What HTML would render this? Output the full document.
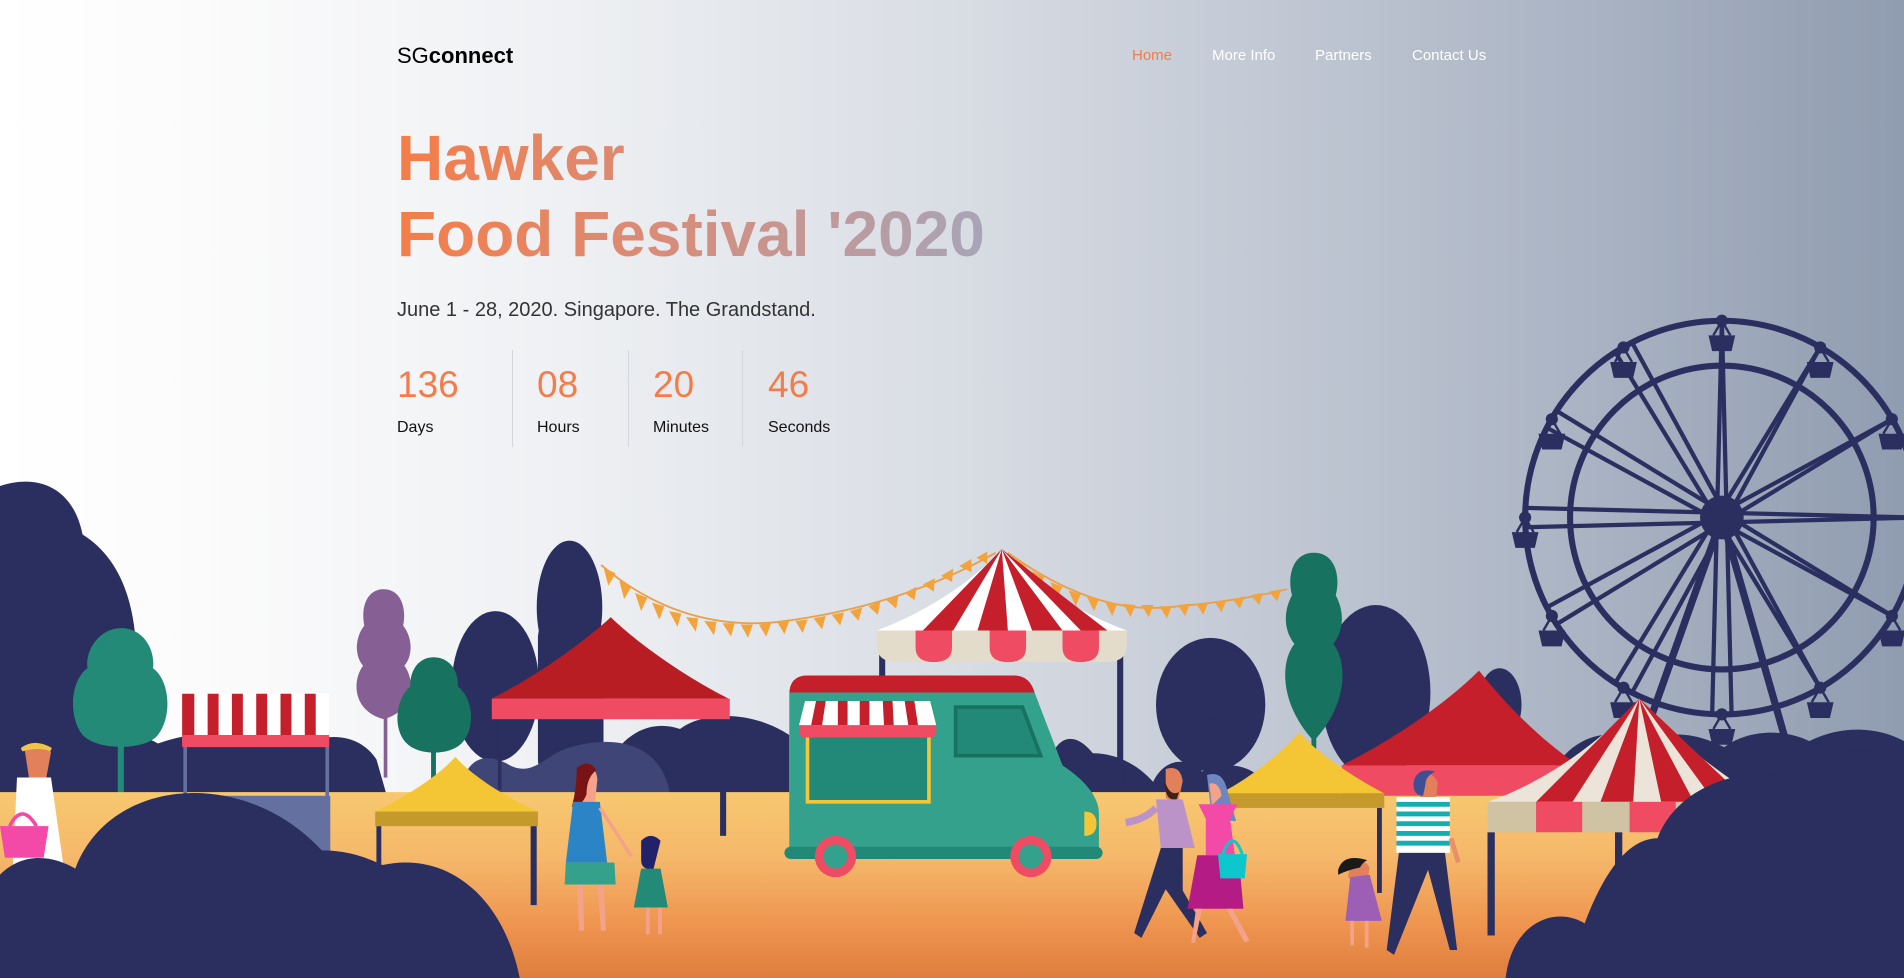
<!DOCTYPE html>
<html><head><meta charset="utf-8"><style>
html,body{margin:0;padding:0}
body{width:1904px;height:978px;overflow:hidden;position:relative;font-family:"Liberation Sans",Arial,sans-serif;
background:linear-gradient(90deg,#ffffff 0%,#fafafb 13%,#eef0f3 30%,#d9dde4 50%,#c0c7d3 68%,#a7b1c1 85%,#909cb0 100%);}
svg.bg{position:absolute;left:0;top:0;width:1904px;height:978px}
.logo{position:absolute;left:397px;top:43px;font-size:22px;color:#000}
.logo b{font-weight:700}
.nav{position:absolute;top:47px;font-size:15px;color:#fff}
h1{position:absolute;left:397px;top:120px;margin:0;font-size:64px;line-height:76px;font-weight:700;white-space:nowrap;
background:linear-gradient(90deg,#f57d48 0px,#d98c78 260px,#a7a5b8 590px);-webkit-background-clip:text;background-clip:text;color:transparent;width:600px}
.sub{position:absolute;left:397px;top:299px;font-size:20px;color:#333}
.cd{position:absolute;top:350px;height:97px}
.cd .n{font-size:37px;color:#f47c48;margin-top:15px;line-height:40px}
.cd .l{font-size:16px;color:#111;margin-top:14px}
.div{position:absolute;top:350px;width:1px;height:97px;background:#d3d6dd}
</style></head><body>
<svg class="bg" viewBox="0 0 1568 805" preserveAspectRatio="none" xmlns="http://www.w3.org/2000/svg">
<defs>
<linearGradient id="g" x1="0" y1="0" x2="0" y2="1"><stop offset="0" stop-color="#f7c870"/><stop offset="0.35" stop-color="#f5b86a"/><stop offset="0.7" stop-color="#ef9651"/><stop offset="1" stop-color="#df7d3d"/></linearGradient>
<g id="gd"><line x1="0" y1="0" x2="-7" y2="12" stroke="#2a2f5f" stroke-width="2"/><line x1="0" y1="0" x2="7" y2="12" stroke="#2a2f5f" stroke-width="2"/><path d="M-11 12h22l-3 13h-16z" fill="#2a2f5f"/><circle r="5" fill="#2a2f5f"/></g>
</defs>
<g stroke="#2a2f5f" fill="none">
<circle cx="1418" cy="426" r="162" stroke-width="5"/>
<circle cx="1418" cy="426" r="125" stroke-width="5"/>
<g stroke-width="3.5">
<g id="sp"><line x1="1418" y1="264" x2="1410" y2="588"/><line x1="1418" y1="264" x2="1426" y2="588"/></g>
<use href="#sp" transform="rotate(30 1418 426)"/><use href="#sp" transform="rotate(60 1418 426)"/><use href="#sp" transform="rotate(90 1418 426)"/><use href="#sp" transform="rotate(120 1418 426)"/><use href="#sp" transform="rotate(150 1418 426)"/>
</g>
<line x1="1418" y1="426" x2="1335" y2="660" stroke-width="6"/><line x1="1418" y1="426" x2="1485" y2="660" stroke-width="6"/>
</g>
<circle cx="1418" cy="426" r="18" fill="#2a2f5f"/>
<use href="#gd" x="1418" y="264"/><use href="#gd" x="1499" y="286"/><use href="#gd" x="1558" y="345"/><use href="#gd" x="1580" y="426"/><use href="#gd" x="1558" y="507"/><use href="#gd" x="1499" y="566"/><use href="#gd" x="1418" y="588"/><use href="#gd" x="1337" y="566"/><use href="#gd" x="1278" y="507"/><use href="#gd" x="1256" y="426"/><use href="#gd" x="1278" y="345"/><use href="#gd" x="1337" y="286"/>
<path d="M0 400 C30 390 60 400 68 440 C100 460 115 500 112 560 L112 660 L0 660Z" fill="#2a2f5f"/>
<ellipse cx="469" cy="500" rx="27" ry="55" fill="#2a2f5f"/><rect x="443" y="500" width="54" height="150" rx="25" fill="#2a2f5f"/>
<ellipse cx="408" cy="565" rx="36" ry="62" fill="#2a2f5f"/>
<ellipse cx="997" cy="580" rx="45" ry="55" fill="#2a2f5f"/><rect x="995" y="590" width="4" height="60" fill="#2a2f5f"/>
<ellipse cx="1133" cy="570" rx="45" ry="72" fill="#2a2f5f"/>
<ellipse cx="1235" cy="580" rx="18" ry="30" fill="#2a2f5f"/>
<path d="M0 660 L0 620 C30 600 60 610 70 615 C90 600 120 605 130 612 C170 598 220 600 250 612 C280 600 300 610 310 625 L320 660Z" fill="#2a2f5f"/>
<path d="M490 660 C500 610 530 590 560 600 C580 585 620 585 650 605 L650 660Z" fill="#2a2f5f"/>
<path d="M860 660 C860 610 880 595 900 620 C920 620 940 630 955 650 L955 660Z" fill="#2a2f5f"/>
<path d="M1270 660 C1280 610 1320 595 1350 610 C1380 600 1400 605 1420 615 C1440 600 1470 600 1490 610 C1520 595 1550 600 1568 610 L1568 660Z" fill="#2a2f5f"/>
<path d="M1090 660 C1100 640 1130 630 1150 645 L1150 660Z" fill="#2a2f5f"/>
<path d="M945 660 C950 625 975 620 990 635 C1010 625 1040 628 1050 660Z" fill="#2a2f5f"/>
<rect x="97" y="580" width="5" height="75" fill="#238a78"/>
<path d="M100 517 C118 517 128 535 126 550 C140 560 142 590 130 605 C120 618 80 618 68 605 C56 590 58 560 72 550 C70 535 82 517 100 517Z" fill="#238a78"/>
<rect x="316" y="580" width="3" height="60" fill="#866094"/>
<path d="M316 485 C330 485 335 500 332 515 C340 525 340 540 333 548 C342 560 342 585 316 592 C290 585 290 560 299 548 C292 540 292 525 300 515 C297 500 302 485 316 485Z" fill="#866094"/>
<rect x="355" y="600" width="4" height="45" fill="#177260"/>
<path d="M357 541 C372 541 378 555 377 565 C390 575 392 600 380 612 C370 622 345 622 335 612 C323 600 326 575 338 565 C337 555 343 541 357 541Z" fill="#177260"/>
<rect x="1080" y="590" width="4" height="60" fill="#177260"/>
<path d="M1082 455 C1100 455 1104 475 1100 490 C1108 505 1106 520 1098 530 C1110 545 1110 580 1082 610 C1054 580 1054 545 1066 530 C1058 520 1056 505 1064 490 C1060 475 1064 455 1082 455Z" fill="#177260"/>
<path d="M380 655 C380 630 395 615 420 630 C440 640 450 620 470 615 C505 605 545 610 552 655Z" fill="#3f4577"/>
<rect x="0" y="652" width="1568" height="153" fill="url(#g)"/>
<rect x="151" y="600" width="3" height="65" fill="#6470a0"/><rect x="268" y="600" width="3" height="60" fill="#6470a0"/>
<rect x="151" y="655" width="121" height="60" fill="#6470a0"/>
<g>
<rect x="150" y="571" width="121" height="42" fill="#fff"/>
<path d="M150 571h10v42h-10zM171 571h9v42h-9zM191 571h9v42h-9zM211 571h9v42h-9zM231 571h9v42h-9zM251 571h9v42h-9z" fill="#c41f2a"/>
<path d="M150 605h121v10h-121z" fill="#ef4b63"/>
</g>
<rect x="410" y="590" width="3" height="60" fill="#2a2f5f"/><rect x="593" y="590" width="5" height="98" fill="#2a2f5f"/>
<path d="M503 508 C520 525 560 555 600 575 L405 575 C445 555 485 525 503 508Z" fill="#b91d24"/>
<rect x="405" y="575" width="196" height="17" fill="#ef4b63"/>
<path d="M495 465 Q560 520 640 512 Q740 500 820 455" stroke="#e9a04a" fill="none" stroke-width="1.5"/>
<path d="M830 455 Q900 505 960 500 Q1020 495 1060 485" stroke="#e9a04a" fill="none" stroke-width="1.5"/>
<g fill="#f4a23a">
<path d="M497 467l10 5l-6 10z M510 478l10 5l-6 10z M523 488l10 4l-5 11z M537 496l10 3l-4 11z M551 503l10 2l-3 11z M565 508l10 1l-2 11z M580 511l10 1l-2 11z M595 513l10 0l-3 11z M610 514l10 0l-4 11z M625 514l10 -1l-4 11z M640 512l10 -1l-4 11z M655 511l10 -1l-4 11z M670 509l10 -2l-3 11z M685 506l10 -2l-3 11z M700 503l10 -3l-3 11z M715 499l10 -4l-2 11z M730 494l10 -4l-2 11z M745 488l10 -5l-2 11z M760 481l10 -5l-1 11z M775 474l10 -6l-1 11z M790 466l10 -6l0 11z M804 459l9 -5l0 10z"/>
<path d="M835 460l10 5l-5 10z M850 470l10 5l-5 10z M865 479l10 4l-5 10z M880 486l10 3l-4 10z M895 491l10 2l-4 10z M910 495l10 2l-4 10z M925 497l10 1l-4 10z M940 498l10 0l-4 10z M955 499l10 0l-4 10z M970 498l10 -1l-4 10z M985 497l10 -1l-4 10z M1000 495l10 -1l-4 10z M1015 493l10 -2l-4 10z M1030 490l10 -2l-3 10z M1045 487l10 -2l-3 10z"/>
</g>
<rect x="724" y="530" width="5" height="110" fill="#2a2f5f"/><rect x="920" y="530" width="5" height="115" fill="#2a2f5f"/>
<path d="M825 452 C800 480 760 505 722 519 L928 519 C890 505 850 480 825 452Z" fill="#fff"/>
<path d="M825 452 L760 519 L785 519Z M825 452 L805 519 L830 519Z M825 452 L850 519 L875 519Z M825 452 L890 519 L912 519Z" fill="#c41f2a"/>
<path d="M722 519h206v12q0 14 -17 14h-172q-17 0 -17 -14z" fill="#e4dccb"/>
<path d="M754 519h30v14q0 12 -15 12q-15 0 -15 -12z M815 519h30v14q0 12 -15 12q-15 0 -15 -12z M875 519h30v14q0 12 -15 12q-15 0 -15 -12z" fill="#ef4b63"/>
<path d="M650 572 Q650 556 665 556 L835 556 Q848 556 852 570 L875 630 Q905 650 905 670 L905 700 L650 700Z" fill="#33a18c"/>
<path d="M650 572 Q650 556 665 556 L835 556 Q848 556 852 570 L650 570Z" fill="#c41f2a"/>
<path d="M787 582h55l15 40h-70z" fill="#228878" stroke="#177260" stroke-width="3"/>
<rect x="665" y="600" width="100" height="60" fill="#228878" stroke="#f4c534" stroke-width="3"/>
<path d="M663 577h103l5 20h-113z" fill="#fff"/>
<path d="M672 577h8l-3 20h-9z M690 577h8v20h-8z M708 577h8v20h-8z M727 577h8l1 20h-8z M745 577h8l3 20h-8z" fill="#c41f2a"/>
<path d="M658 597h113v5q0 5 -6 5h-101q-6 0 -6 -5z" fill="#ef4b63"/>
<path d="M893 668 q10 0 10 10 q0 10 -10 10z" fill="#f4c534"/>
<rect x="646" y="697" width="262" height="10" rx="5" fill="#228878"/>
<circle cx="688" cy="705" r="17" fill="#ef4b63"/><circle cx="688" cy="705" r="10" fill="#33a18c"/>
<circle cx="849" cy="705" r="17" fill="#ef4b63"/><circle cx="849" cy="705" r="10" fill="#33a18c"/>
<rect x="310" y="680" width="4" height="40" fill="#2a2f5f"/><rect x="437" y="680" width="5" height="65" fill="#2a2f5f"/>
<path d="M375 623 C390 640 420 658 443 668 L309 668 C330 658 360 640 375 623Z" fill="#f4c534"/>
<rect x="309" y="668" width="134" height="12" fill="#c39a2b"/>
<rect x="1134" y="665" width="4" height="70" fill="#2a2f5f"/>
<path d="M1218 552 C1240 580 1270 610 1300 630 L1105 630 C1145 610 1190 580 1218 552Z" fill="#c41f2a"/>
<rect x="1105" y="630" width="180" height="25" fill="#ef4b63"/>
<path d="M1070 603 C1085 620 1115 640 1140 653 L1005 653 C1030 640 1055 620 1070 603Z" fill="#f4c534"/>
<rect x="1005" y="653" width="135" height="12" fill="#c39a2b"/>
<rect x="1225" y="685" width="6" height="85" fill="#2a2f5f"/><rect x="1330" y="685" width="6" height="75" fill="#2a2f5f"/>
<path d="M1350 575 C1320 610 1270 645 1225 660 L1455 660 C1420 640 1380 610 1350 575Z" fill="#ece4d8"/>
<path d="M1350 575 L1265 660 L1295 660Z M1350 575 L1318 660 L1345 660Z M1350 575 L1368 660 L1395 660Z M1350 575 L1412 660 L1440 660Z" fill="#c41f2a"/>
<rect x="1225" y="660" width="230" height="25" fill="#d0c3a3"/>
<path d="M1265 660h38v25h-38z M1342 660h38v25h-38z M1418 660h30v25h-30z" fill="#ef4b63"/>
<path d="M20 615 q14 -6 22 4 l-4 22 l-14 0z" fill="#e2805c"/><path d="M18 617 q10 -8 24 0 q-10 -4 -24 0z" fill="#f0c34b" stroke="#f0c34b" stroke-width="3"/>
<path d="M14 640 l28 0 l12 85 l-44 0z" fill="#fff"/>
<path d="M0 680 l40 0 l-4 26 l-32 0z" fill="#f34aa8"/><path d="M8 680 q10 -20 22 0" stroke="#f34aa8" stroke-width="3" fill="none"/>
<path d="M478 633 q12 -6 14 8 l-2 20 l-12 0z" fill="#f4a38a"/><path d="M475 632 q10 -8 16 2 q-8 6 -8 20 q-4 10 -12 10 q4 -16 4 -32z" fill="#7a1414"/>
<path d="M472 660 l22 0 l6 50 l-34 0z" fill="#2a84c6"/><path d="M466 710 l40 0 l1 18 l-42 0z" fill="#33a18c"/>
<path d="M475 728 l5 0 l1 38 l-4 0z M492 728 l5 0 l2 38 l-4 0z" fill="#f4a38a"/>
<path d="M494 665 q12 18 26 40" stroke="#f4a38a" stroke-width="3" fill="none"/>
<path d="M530 690 q8 -4 10 6 l0 12 l-10 0z" fill="#f4a38a"/><path d="M528 692 q8 -8 16 0 l-6 24 q-10 0 -10 -8z" fill="#22216b"/>
<path d="M528 715 l16 0 l6 32 l-28 0z" fill="#238a78"/><path d="M532 747 h3 v22 h-3z M542 747 h3 v22 h-3z" fill="#f4a38a"/>
<path d="M960 633 q12 -4 14 10 l-4 18 l-10 -4z" fill="#e2805c"/><path d="M959 642 q4 14 12 10 l-2 6 q-10 2 -10 -16z" fill="#3e2314"/>
<path d="M952 658 l22 0 l10 40 l-28 0z" fill="#bb93c8"/><path d="M952 665 q-10 10 -25 12" stroke="#bb93c8" stroke-width="6" fill="none"/>
<path d="M956 698 l18 0 l0 35 l20 35 l-6 4 l-28 -40 l-20 40 l-6 -4z" fill="#2a2f5f"/>
<path d="M994 638 q12 -4 16 10 l8 28 l-20 -2z" fill="#6f86c0"/><path d="M996 645 q8 -2 10 10 l-8 8z" fill="#f4a38a"/>
<path d="M987 662 l32 0 l-6 12 l4 30 l-24 0 l0 -30z" fill="#f34aa8"/>
<path d="M986 704 l34 0 l4 44 l-46 0z" fill="#b41b84"/>
<path d="M985 748 l5 0 l-6 28 l-3 0z M1010 748 l5 0 l14 26 l-4 2z" fill="#f4a38a"/>
<path d="M1003 703 h24 l-2 20 h-20z" fill="#0ec7cc"/><path d="M1007 703 q8 -22 16 0" stroke="#0ec7cc" stroke-width="2.5" fill="none"/>
<path d="M1168 640 q10 -8 16 4 l-2 22 l-12 0z" fill="#e2805c"/><path d="M1164 645 q2 -14 18 -10 q-8 4 -8 10 l-2 10 q-8 0 -8 -10z" fill="#3f4f96"/>
<g><rect x="1150" y="656" width="44" height="46" fill="#fff"/>
<path d="M1150 660h44v4h-44z M1150 668h44v4h-44z M1150 676h44v4h-44z M1150 684h44v4h-44z M1150 692h44v4h-44z" fill="#14aeb0"/></g>
<path d="M1152 702 l38 0 l10 80 l-6 0 l-18 -66 l-28 70 l-6 -4z" fill="#2a2f5f"/>
<path d="M1195 690 l6 20" stroke="#e8906a" stroke-width="4"/>
<path d="M1112 712 q10 -8 16 2 l-2 10 q-10 4 -16 -2z" fill="#e2805c"/><path d="M1102 716 q4 -14 24 -8 q-4 2 -6 6 q-10 2 -18 6z" fill="#1a1a1a"/>
<path d="M1112 722 l16 -2 l10 38 l-30 0z" fill="#9d5fb6"/><path d="M1112 758 h3 v20 h-3z M1124 758 h3 v22 h-3z" fill="#f4a38a"/>
<path d="M0 805 L0 720 C20 700 45 705 62 715 C90 640 200 630 265 700 C285 700 300 705 315 712 C370 700 415 740 428 805Z" fill="#2a2f5f"/>
<path d="M1240 805 C1245 760 1280 745 1305 760 C1320 720 1340 690 1365 690 C1380 650 1430 630 1470 640 C1490 615 1545 610 1568 630 L1568 805Z" fill="#2a2f5f"/>
</svg>
<div class="logo">SG<b>connect</b></div>
<div class="nav" style="left:1132px;color:#f47c48">Home</div>
<div class="nav" style="left:1212px">More Info</div>
<div class="nav" style="left:1315px">Partners</div>
<div class="nav" style="left:1412px">Contact Us</div>
<h1>Hawker<br>Food Festival '2020</h1>
<div class="sub">June 1 - 28, 2020. Singapore. The Grandstand.</div>
<div class="cd" style="left:397px"><div class="n">136</div><div class="l">Days</div></div>
<div class="div" style="left:512px"></div>
<div class="cd" style="left:537px"><div class="n">08</div><div class="l">Hours</div></div>
<div class="div" style="left:628px"></div>
<div class="cd" style="left:653px"><div class="n">20</div><div class="l">Minutes</div></div>
<div class="div" style="left:742px"></div>
<div class="cd" style="left:768px"><div class="n">46</div><div class="l">Seconds</div></div>
</body></html>
